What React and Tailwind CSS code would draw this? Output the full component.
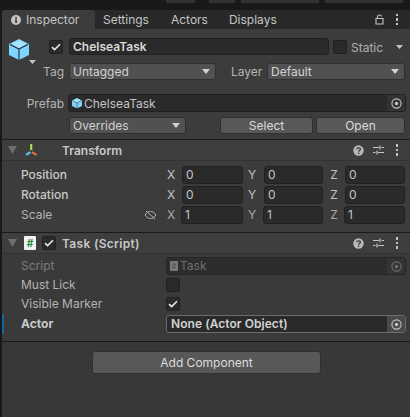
import { Fragment } from "react";

const fontStack = "font-['Inter','Noto_Sans',sans-serif]";

function Tri({ className = "", color = "#c4c4c4" }) {
  return (
    <svg viewBox="0 0 9 5" preserveAspectRatio="none" className={"shrink-0 " + className}>
      <path d="M0 0 H9 L4.5 5 Z" fill={color} />
    </svg>
  );
}

function Check({ checked, dim, className = "" }) {
  return (
    <div className={"w-[14px] h-[14px] shrink-0 rounded-[2px] bg-[#2a2a2a] border border-[#212121] flex items-center justify-center " + className}>
      {checked && (
        <svg width="10" height="8" viewBox="0 0 10 8">
          <path d="M1 4.2 L3.6 6.6 L9 1.2" fill="none" stroke={dim ? "#a0a0a0" : "#e8e8e8"} strokeWidth="1.6" />
        </svg>
      )}
    </div>
  );
}

function Cube({ size = 20 }) {
  return (
    <svg width={size} height={size * 1.05} viewBox="0 0 20 21" className="shrink-0">
      <path d="M10 0 L20 5 V16 L10 21 L0 16 V5 Z" fill="#7fd6fc" />
      <path d="M10 1.2 L18.4 5.2 L10 9.4 L1.6 5.2 Z" fill="#a6e4fd" />
      <path d="M10 10 V21 M1 5.4 L10 10 L19 5.4" fill="none" stroke="#27394a" strokeWidth="1.2" />
    </svg>
  );
}

function TargetDot({ dim }) {
  const c = dim ? "#7a7a7a" : "#c4c4c4";
  return (
    <svg width="11" height="11" viewBox="0 0 11 11">
      <circle cx="5.5" cy="5.5" r="4.6" fill="none" stroke={c} strokeWidth="1.1" />
      <circle cx="5.5" cy="5.5" r="1.7" fill={c} />
    </svg>
  );
}

function ObjectField({ className = "", children, active, dim }) {
  return (
    <div className={"h-[18px] flex items-center rounded-[3px] border bg-[#2a2a2a] " + (active ? "border-[#6c6c6c] " : "border-[#212121] ") + className}>
      <div className="flex-1 flex items-center min-w-0 pl-[3px]">{children}</div>
      <div className={"w-[18px] h-full flex items-center justify-center rounded-r-[2px] " + (active ? "bg-[#4a4a4a]" : "bg-[#333333]")}>
        <TargetDot dim={dim} />
      </div>
    </div>
  );
}

function Dropdown({ label, className = "" }) {
  return (
    <div className={"h-[17px] flex items-center justify-between pl-[3px] pr-[5px] rounded-[3px] bg-[#515151] border border-[#303030] text-[#d2d2d2] " + className}>
      <span>{label}</span>
      <Tri className="w-[8px] h-[5px]" color="#d2d2d2" />
    </div>
  );
}

function Btn({ label, className = "" }) {
  return (
    <div className={"flex items-center justify-center rounded-[3px] bg-[#585858] border border-[#303030] text-[#dcdcdc] " + className}>
      {label}
    </div>
  );
}

function Dots({ className = "" }) {
  return (
    <div className={"flex flex-col gap-[2px] " + className}>
      <div className="w-[2.5px] h-[2.5px] bg-[#c4c4c4]" />
      <div className="w-[2.5px] h-[2.5px] bg-[#c4c4c4]" />
      <div className="w-[2.5px] h-[2.5px] bg-[#c4c4c4]" />
    </div>
  );
}

function HeaderIcons() {
  return (
    <div className="ml-auto flex items-center mr-[12px]">
      <svg width="11" height="11" viewBox="0 0 11 11">
        <circle cx="5.5" cy="5.5" r="5.2" fill="#b8b8b8" />
        <path d="M3.7 4.3 C3.7 2.3 7.4 2.3 7.4 4.2 C7.4 5.4 5.6 5.4 5.6 6.8" fill="none" stroke="#3e3e3e" strokeWidth="1.3" />
        <rect x="4.9" y="7.6" width="1.4" height="1.4" fill="#3e3e3e" />
      </svg>
      <svg width="11" height="10" viewBox="0 0 11 10" className="ml-[9px]">
        <path d="M0 2.5 H6 M8.5 2.5 H11 M0 7.5 H2.5 M5 7.5 H11 M7 0.5 V4.5 M4 5.5 V9.5" stroke="#c4c4c4" strokeWidth="1.2" fill="none" />
      </svg>
      <Dots className="ml-[12px]" />
    </div>
  );
}

function VectorRow({ label, value, scale }) {
  const axes = [
    { k: "X", letter: "", w: scale ? "w-[62px]" : "w-[61px]", gap: scale ? "ml-[6px]" : "ml-[7px]" },
    { k: "Y", letter: "ml-[5px]", w: scale ? "w-[60px]" : "w-[59px]", gap: scale ? "ml-[7px]" : "ml-[8px]" },
    { k: "Z", letter: "ml-[7px]", w: scale ? "w-[61px]" : "w-[60px]", gap: scale ? "ml-[6px]" : "ml-[7px]" },
  ];
  return (
    <div className="h-[20px] flex items-center pl-[19px]">
      <span className={"w-[146px] flex items-center justify-between pr-[10px] " + (scale ? "text-[#b4b4b4]" : "text-[#c8c8c8] font-medium")}>
        {label}
        {scale && (
          <svg width="13" height="10" viewBox="0 0 13 10">
            <path d="M1 5 C3 2 5 1.5 6.5 1.5 C8 1.5 10 2 12 5 C10 8 8 8.5 6.5 8.5 C5 8.5 3 8 1 5 Z M2 1 L11 9" fill="none" stroke="#b4b4b4" strokeWidth="1" />
          </svg>
        )}
      </span>
      {axes.map((a) => (
        <Fragment key={a.k}>
          <span className={"w-[8px] text-center " + a.letter + " " + (scale ? "text-[#a8a8a8]" : "text-[#c4c4c4]")}>{a.k}</span>
          <div className={"h-[18px] flex items-center pl-[3px] rounded-[3px] bg-[#2a2a2a] border border-[#212121] text-[#c4c4c4] " + a.gap + " " + a.w}>
            {value}
          </div>
        </Fragment>
      ))}
    </div>
  );
}

function TabStrip() {
  return (
    <div className="h-[19px] flex bg-[#282828] text-[#c4c4c4]">
      <div className="w-[93px] flex items-center pl-[9px] pt-[1px] bg-[#3c3c3c] rounded-t-[3px]">
        <svg width="10" height="10" viewBox="0 0 10 10">
          <circle cx="5" cy="5" r="5" fill="#c4c4c4" />
          <rect x="4.2" y="4.2" width="1.7" height="3.8" fill="#3c3c3c" />
          <rect x="4.2" y="2" width="1.7" height="1.6" fill="#3c3c3c" />
        </svg>
        <span className="ml-[5px]">Inspector</span>
      </div>
      <span className="ml-[8px] pt-[1px] self-center">Settings</span>
      <span className="ml-[22px] pt-[1px] self-center">Actors</span>
      <span className="ml-[21px] pt-[1px] self-center">Displays</span>
      <div className="ml-auto flex items-center mr-[12px]">
        <svg width="9" height="11" viewBox="0 0 9 11">
          <path d="M1 4.5 H8 V10 H1 Z M2.5 4.5 V2.6 C2.5 0.4 6.5 0.4 6.5 2.6" fill="none" stroke="#c4c4c4" strokeWidth="1.1" />
        </svg>
        <Dots className="ml-[12px]" />
      </div>
    </div>
  );
}

export default function App() {
  return (
    <div className={"w-[410px] h-[417px] overflow-hidden bg-[#191919] text-[12px] leading-none pl-[2px] " + fontStack}>
      <div className="h-[10px] flex items-start">
        <div className="ml-[164px] w-[29px] h-[3px] bg-[#333333]" />
        <div className="ml-[14px] w-[26px] h-[3px] bg-[#333333]" />
        <div className="ml-[6px] w-[78px] h-[3px] bg-[#333333]" />
        <div className="ml-[6px] w-[78px] h-[3px] bg-[#333333]" />
      </div>

      <TabStrip />

      <div className="h-[388px] bg-[#383838]">
        {/* object header */}
        <div className="bg-[#3c3c3c] h-[111px] pt-[9px] border-b border-[#1a1a1a]">
          <div className="h-[17px] flex items-start">
            <div className="ml-[7px] mt-[1px] w-[40px] shrink-0 relative">
              <Cube />
              <Tri className="absolute left-[20px] top-[21px] w-[7px] h-[4px]" />
            </div>
            <Check checked className="mt-[2px]" />
            <div className="ml-[6px] w-[260px] h-[17px] flex items-center pl-[3px] pt-[1px] rounded-[3px] bg-[#2a2a2a] border border-[#212121] text-[#d8d8d8] font-semibold">
              ChelseaTask
            </div>
            <Check className="ml-[4px] mt-[2px]" />
            <span className="ml-[4px] mt-[4px] text-[#b0b0b0]">Static</span>
            <Tri className="ml-[13px] mt-[7px] w-[7px] h-[4px]" />
          </div>

          <div className="h-[17px] mt-[8px] flex items-center">
            <span className="w-[62px] text-right text-[#b4b4b4]">Tag</span>
            <Dropdown label="Untagged" className="ml-[5px] w-[147px]" />
            <span className="ml-[15px] w-[32px] text-[#b4b4b4]">Layer</span>
            <Dropdown label="Default" className="ml-[4px] w-[138px]" />
          </div>

          <div className="mt-[14px] flex items-center">
            <span className="w-[62px] pt-[1px] text-right text-[#b4b4b4]">Prefab</span>
            <ObjectField className="ml-[4px] w-[338px]">
              <Cube size={10} />
              <span className="ml-[2px] pt-[1px] text-[#c4c4c4]">ChelseaTask</span>
            </ObjectField>
          </div>

          <div className="h-[17px] mt-[5px] flex">
            <Dropdown label="Overrides" className="ml-[67px] w-[117px]" />
            <Btn label="Select" className="ml-[34px] w-[93px]" />
            <Btn label="Open" className="ml-[3px] w-[89px]" />
          </div>
        </div>

        {/* transform */}
        <div className="h-[21px] flex items-center bg-[#3e3e3e] border-b border-[#333333]">
          <Tri className="ml-[6px] w-[9px] h-[8px]" color="#6e6e6e" />
          <svg width="14" height="13" viewBox="0 0 14 15" className="ml-[7px] shrink-0">
            <rect x="6" y="0" width="2.5" height="7" fill="#a5e04a" />
            <path d="M5.5 8.5 L7 10.5 L2 13.5 L0.5 11.5 Z" fill="#5ec1f5" />
            <path d="M8.5 8.5 L7.5 10.5 L12.5 13.5 L14 11.5 Z" fill="#f0704a" />
          </svg>
          <span className="ml-[24px] pt-[1px] text-[#c8c8c8] font-semibold">Transform</span>
          <HeaderIcons />
        </div>
        <div className="h-[72px] pt-[4px] border-b border-[#1a1a1a] bg-[#3c3c3c]">
          <VectorRow label="Position" value="0" />
          <VectorRow label="Rotation" value="0" />
          <VectorRow label="Scale" value="1" scale />
        </div>

        {/* task script */}
        <div className="h-[21px] flex items-center bg-[#3e3e3e] border-b border-[#333333]">
          <Tri className="ml-[6px] w-[9px] h-[8px]" color="#6e6e6e" />
          <div className="ml-[7px] w-[12px] h-[14px] bg-[#f2f2f2] rounded-[1px] flex items-center justify-center text-[10px] font-bold text-[#1f8a3a]">#</div>
          <Check checked className="ml-[6px]" />
          <span className="ml-[6px] pt-[1px] tracking-[0.3px] text-[#c8c8c8] font-semibold">Task (Script)</span>
          <HeaderIcons />
        </div>
        <div className="h-[88px] pt-[3px] border-b border-[#1a1a1a] bg-[#3a3a3a]">
          <div className="h-[18px] flex items-center pl-[19px]">
            <span className="w-[145px] text-[#7c7c7c]">Script</span>
            <ObjectField dim className="w-[240px] opacity-80">
              <div className="w-[8px] h-[10px] bg-[#8a8a8a] rounded-[1px] flex items-center justify-center text-[7px] text-[#3a5a3a]">#</div>
              <span className="ml-[2px] text-[#7c7c7c]">Task</span>
            </ObjectField>
          </div>
          <div className="h-[14px] mt-[3px] flex items-center pl-[19px]">
            <span className="w-[145px] text-[#b4b4b4]">Must Lick</span>
            <Check />
          </div>
          <div className="h-[14px] mt-[5px] flex items-center pl-[19px]">
            <span className="w-[145px] text-[#b4b4b4]">Visible Marker</span>
            <Check checked />
          </div>
          <div className="h-[18px] mt-[4px] flex items-center">
            <div className="w-[2px] h-[20px] bg-[#0f6a9a]" />
            <span className="ml-[17px] w-[145px] text-[#c8c8c8] font-bold">Actor</span>
            <ObjectField active className="w-[240px]">
              <span className="ml-[1px] tracking-[0.05px] text-[#d2d2d2] font-semibold">None (Actor Object)</span>
            </ObjectField>
          </div>
        </div>

        <div className="pt-[9px] pl-[90px]">
          <Btn label="Add Component" className="w-[229px] h-[23px]" />
        </div>
      </div>
    </div>
  );
}
